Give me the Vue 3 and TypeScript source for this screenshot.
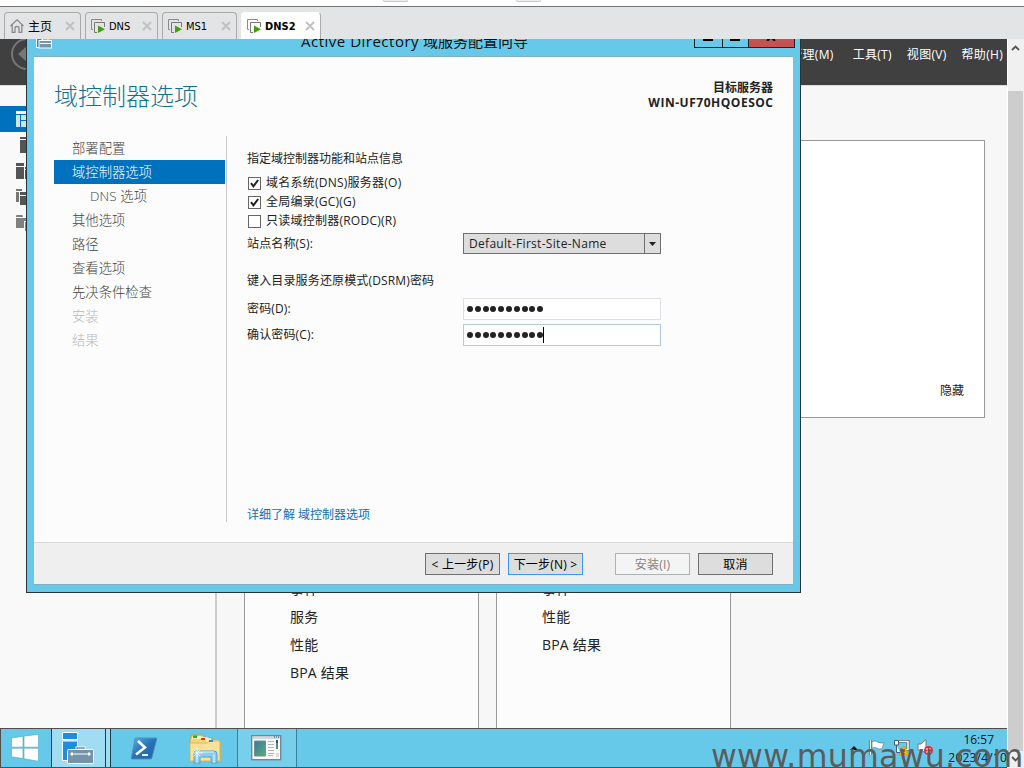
<script setup lang="ts">
interface Tab { label: string; width: number; home?: boolean; active?: boolean }
interface Step { label: string; state?: 'active' | 'off'; sub?: boolean }

const tabs: Tab[] = [
  { label: '主页', width: 77, home: true },
  { label: 'DNS', width: 73 },
  { label: 'MS1', width: 75 },
  { label: 'DNS2', width: 80, active: true },
]
const steps: Step[] = [
  { label: '部署配置' },
  { label: '域控制器选项', state: 'active' },
  { label: 'DNS 选项', sub: true },
  { label: '其他选项' },
  { label: '路径' },
  { label: '查看选项' },
  { label: '先决条件检查' },
  { label: '安装', state: 'off' },
  { label: '结果', state: 'off' },
]
const options = [
  { label: '域名系统(DNS)服务器(O)', checked: true },
  { label: '全局编录(GC)(G)', checked: true },
  { label: '只读域控制器(RODC)(R)', checked: false },
]
const cards = [
  ['事件', '服务', '性能', 'BPA 结果'],
  ['事件', '性能', 'BPA 结果'],
]
const dots = Array.from({ length: 10 }, (_, i) => i)
</script>

<template>
  <div class="screen">
    <div class="toolstrip"><i class="stub first"></i><i class="stub second"></i></div>
    <div class="tabbar">
      <div v-for="t in tabs" :key="t.label" class="tab" :class="{ active: t.active, home: t.home }" :style="{ width: t.width + 'px' }">
        <svg v-if="t.home" class="tab-icon" width="16" height="16" viewBox="0 0 16 16" fill="none" stroke="#8a8a8a" stroke-width="1.3">
          <path d="M1.5 8 8 1.8 14.5 8M3.2 7v7.3H6V9.8Q6 8.5 8 8.5T10 9.8v4.5h2.8V7" />
        </svg>
        <svg v-else class="tab-icon" width="16" height="16" viewBox="0 0 16 16">
          <path d="M3 11.5H1.5v-10h10V3" fill="none" stroke="#8a8a8a" />
          <path d="M7 14.5H4.5v-10h10V9" fill="none" stroke="#777" />
          <path d="M8 7.5 15 11.2 8 15z" fill="#43a00d" />
        </svg>
        <span class="tab-label">{{ t.label }}</span>
        <svg class="tab-close" width="10" height="10" viewBox="0 0 10 10"><path d="M1 1l8 8M9 1l-8 8" stroke="#c2c2c2" stroke-width="2" /></svg>
      </div>
    </div>

    <div class="stage">
      <div class="desktop">
        <header class="manager-head">
          <svg class="back" width="32" height="34" viewBox="0 0 32 34">
            <circle cx="27" cy="15" r="15" fill="none" stroke="#777" stroke-width="2" />
            <path d="M18 15 28 6v18z" fill="#777" />
          </svg>
          <nav class="menu"><span>管理(M)</span><span>工具(T)</span><span>视图(V)</span><span>帮助(H)</span></nav>
        </header>
        <div class="manager-body">
          <aside class="sidebar">
            <div class="side-item selected">
              <svg width="16" height="16" viewBox="0 0 16 16"><path d="M0 0h16v3H0z" fill="#fff" /><path d="M0 4h4v12H0zM5 4h11v5H5zM5 10h11v6H5z" fill="#cce3f3" /></svg>
            </div>
            <div class="side-item"><svg width="16" height="16" viewBox="0 0 16 16"><path d="M4 0h12v2H4zM4 3h12v13H4z" fill="#555" /></svg></div>
            <div class="side-item"><svg width="16" height="16" viewBox="0 0 16 16"><path d="M0 0h8v3H0zM0 4h8v12H0zM9 7h7v9H9zM9 4h7v2H9z" fill="#555" /></svg></div>
            <div class="side-item"><svg width="16" height="16" viewBox="0 0 16 16"><path d="M0 0h6v2H0zM0 3h3v10H0z" fill="#777" /><path d="M4 3h12v3H4zM4 7h12v9H4z" fill="#555" /></svg></div>
            <div class="side-item"><svg width="16" height="16" viewBox="0 0 16 16"><path d="M0 1Q0 0 1 0h5q1 0 1 2H0zM0 3h10v3H8v7H0zM9 7h7v9H9z" fill="#808080" /></svg></div>
          </aside>
          <main class="dashboard">
            <section class="welcome"><span>隐藏</span></section>
            <div class="cards">
              <section v-for="(c, i) in cards" :key="i" class="card"><p v-for="line in c" :key="line">{{ line }}</p></section>
            </div>
          </main>
        </div>

        <footer class="taskbar">
          <div class="start">
            <svg width="28" height="28" viewBox="0 0 28 28" stroke="#4ba6c8" stroke-width=".6" fill="#fff"><path d="M.5 4 12 2.3v10.9H.5zM13 2.1 27.5.4v12.8H13zM.5 14.2H12v10.3L.5 22.8zM13 14.2h14.5v13L13 24.8z" /></svg>
          </div>
          <div class="task manager-task">
            <svg width="33" height="33" viewBox="0 0 33 33">
              <path d="M.5.5h15v7H.5zM.5 9h15v19.5H.5z" fill="#1f8dde" stroke="#fff" />
              <path d="M15 18v-2h7v2" fill="none" stroke="#fff" stroke-width="3" /><path d="M15 18v-2h7v2" fill="none" stroke="#6f8fa8" stroke-width="1.4" />
              <rect x="5.5" y="17.5" width="26" height="14" rx="1" fill="#7593a9" stroke="#fff" />
              <path d="M8 22h21" stroke="#fff" /><path d="M10 20.5v3M27 20.5v3" stroke="#fff" stroke-width="2" />
            </svg>
          </div>
          <div class="stack-edge"></div>
          <div class="pinned shell">
            <svg width="28" height="24" viewBox="0 0 28 24">
              <defs><linearGradient id="ps" x1="0" x2="1" y1="0" y2="1"><stop stop-color="#64b0dc" /><stop offset=".5" stop-color="#2473b5" /><stop offset="1" stop-color="#2460b4" /></linearGradient></defs>
              <path d="M6 1h20q1 0 .8 1l-5 19q-.3 1-1.5 1H2q-1 0-.7-1L5 2q.2-1 1-1z" fill="url(#ps)" stroke="#4c91bd" />
              <path d="M8 4l7 6.5-9 7" fill="none" stroke="#fff" stroke-width="2.5" /><path d="M12 18h6" stroke="#dff2ff" stroke-width="2" />
            </svg>
          </div>
          <div class="pinned folder">
            <svg width="32" height="32" viewBox="0 0 32 32">
              <path d="M1 27V5q0-1 1-1V2q0-1 1-1h12v3h8v3h8v20z" fill="#f3d57b" stroke="#c69d39" />
              <path d="M3 4h15v3h11M5 3h7M14 5h8M22 8h8" fill="none" stroke="#fff2ba" stroke-width="1.6" />
              <path d="M1 9h17l3-2h10v20H1z" fill="#f9e198" stroke="#dab958" />
              <path d="M4 1.5h4V4H4z" fill="#12bd2c" /><path d="M12 4h4v2h-4z" fill="#d93b24" /><path d="M20 6h4v2h-4z" fill="#278bd6" />
              <path d="M5 29V19q0-2 2-2h18q3 0 3 3v9h-6v-6H11v6H5z" fill="#8dcced" stroke="#4ca4ce" />
              <path d="M7 18h18M8 20v9M25 20v9" stroke="#d8f3ff" /><path d="M8 13v12M2 19h12M4.500 15.500l7 7M11.500 15.500l-7 7" stroke="#fff" stroke-width=".7" />
            </svg>
          </div>
          <div class="task window-task">
            <svg width="31" height="26" viewBox="0 0 31 26">
              <defs><linearGradient id="pane" x1="0" x2="1" y1="0" y2="1"><stop stop-color="#387aa2" /><stop offset="1" stop-color="#5dac70" /></linearGradient></defs>
              <rect x=".7" y=".7" width="29" height="24" fill="#f9f9f9" stroke="#788692" stroke-width="1.4" />
              <path d="M2 2h27v2H2z" fill="#ccdce4" /><path d="M23 2h1M25 2h1M27 2h1" stroke="#25475b" />
              <path d="M3.500 6h11v15h-11z" fill="url(#pane)" stroke="#7b8f8b" />
              <path d="M17 6.500h6M17 9.500h6M17 12.500h6M17 15.500h6M17 18.500h6M17 20.500h5" stroke="#b5b5b5" />
              <path d="M25 5h2v9h-2z" fill="#4c9a71" /><path d="M25 5h2v3h-2z" fill="#265589" /><path d="M25 18h3v4h-3z" fill="#ddd" />
            </svg>
          </div>
          <div class="tray">
            <svg class="tray-up" width="8" height="4" viewBox="0 0 8 4"><path d="M0 4 4 0l4 4z" fill="#111" /></svg>
            <svg width="17" height="17" viewBox="0 0 17 17"><path d="M1.500 1v15" stroke="#555" stroke-width="3" /><path d="M1.500 1v15" stroke="#fff" stroke-width="1.500" /><path d="M3 2.500q3-1.500 6 .7 3 1.500 6 .5l-2 6q-3 1-5-.5t-5 0z" fill="#fff" stroke="#657b86" stroke-width=".7" /></svg>
            <svg width="17" height="17" viewBox="0 0 17 17"><path d="M5 2.500h10v8H7" fill="none" stroke="#45626e" stroke-width="3" /><path d="M5 2.500h10v8H7" fill="none" stroke="#fff" stroke-width="1.500" /><path d="M1.500 1.500h4V6h-4zM3.500 6v7.500H7" fill="#fff" stroke="#435e6a" /><path d="M11 7 16 16H6z" fill="#f7b519" stroke="#d68c00" stroke-width=".6" /><path d="M11 10v3M11 14v1" stroke="#553400" stroke-width="1.200" /></svg>
            <svg width="17" height="17" viewBox="0 0 17 17"><path d="M1 5h3l5-4.500v14L4 11H1z" fill="#fff" stroke="#6b7d86" /><circle cx="11.500" cy="11.500" r="4.500" fill="#dc2f32" /><path d="m9.500 9.500 4 4m0-4-4 4" stroke="#fff" stroke-width="1.500" /></svg>
          </div>
          <div class="clock"><span>16:57</span><span class="date">2023/4/10</span></div>
        </footer>

        <div class="dialog">
          <div class="dialog-title">
            <svg class="dialog-icon" width="17" height="17" viewBox="0 0 17 17"><path d="M.5 0h6v15.500h-6z" fill="#1f8dde" stroke="#fff" /><rect x="3" y="8.500" width="12.500" height="7.500" fill="#7593a9" stroke="#fff" /><path d="M6 8V6.500h6V8M4 11.500h11" fill="none" stroke="#fff" /></svg>
            <span class="dialog-name"><span class="latin">Active Directory</span> 域服务配置向导</span>
            <div class="controls"><i></i><i></i><i class="close"><svg width="10" height="8" viewBox="0 0 10 8"><path d="M1 0l8 8M9 0 1 8" stroke="#000" stroke-width="2" /></svg></i></div>
          </div>
          <div class="dialog-body">
            <div class="page-head">
              <h1>域控制器选项</h1>
              <div class="target"><span>目标服务器</span><span class="host">WIN-UF70HQOESOC</span></div>
            </div>
            <div class="page">
              <ul class="steps">
                <li v-for="s in steps" :key="s.label" :class="[s.state, { sub: s.sub }]">{{ s.label }}</li>
              </ul>
              <div class="form">
                <div class="caption">指定域控制器功能和站点信息</div>
                <div v-for="o in options" :key="o.label" class="check">
                  <span class="box"><svg v-if="o.checked" width="11" height="11" viewBox="0 0 11 11"><path d="M2 5.200 4.400 8.300 9.200 2" fill="none" stroke="#222" stroke-width="2" /></svg></span>
                  <span class="check-label">{{ o.label }}</span>
                </div>
                <div class="row site"><span>站点名称(S):</span>
                  <div class="combo"><span>Default-First-Site-Name</span><i><svg width="7" height="4" viewBox="0 0 7 4"><path d="M0 0h7L3.500 4z" fill="#222" /></svg></i></div>
                </div>
                <div class="caption dsrm">键入目录服务还原模式(DSRM)密码</div>
                <div class="row"><span>密码(D):</span><div class="password"><b v-for="d in dots" :key="d"></b></div></div>
                <div class="row"><span>确认密码(C):</span><div class="password focus"><b v-for="d in dots" :key="d"></b><i class="caret"></i></div></div>
                <a class="more">详细了解 域控制器选项</a>
              </div>
            </div>
            <div class="actions">
              <button>&lt; 上一步(P)</button><button class="primary">下一步(N) &gt;</button><button class="disabled">安装(I)</button><button>取消</button>
            </div>
          </div>
        </div>
      </div>
      <div class="scrollbar">
        <svg class="arrow up" width="9" height="6" viewBox="0 0 9 6"><path d="M1 5l3.500-3.500L8 5" fill="none" stroke="#555" stroke-width="1.800" /></svg>
        <div class="thumb"></div>
        <svg class="arrow down" width="9" height="6" viewBox="0 0 9 6"><path d="M1 1l3.500 3.500L8 1" fill="none" stroke="#555" stroke-width="1.800" /></svg>
      </div>
    </div>
    <div class="watermark">www.mumawu.com</div>
  </div>
</template>

<style>
body { margin: 0; overflow: hidden; }
</style>

<style scoped>
* { box-sizing: border-box; }
svg { display: block; flex: none; }
.screen { position: relative; width: 1024px; height: 768px; display: flex; flex-direction: column; overflow: hidden; background: #fff; color: #222; font: 12px/16px "Open Sans", "Noto Sans CJK SC", sans-serif; white-space: nowrap; }
.toolstrip { height: 7px; flex: none; border-bottom: 1px solid #707370; display: flex; }
.stub { width: 25px; height: 2px; border: 1px solid #c8c8c8; border-top: 0; border-radius: 0 0 3px 3px; background: #eee; }
.first { margin-left: 383px; }
.second { margin-left: 108px; }
.tabbar { height: 32px; flex: none; display: flex; align-items: flex-end; gap: 4px; padding-left: 4px; background: #e3e4e6; }
.tab { height: 27px; display: flex; align-items: center; border: 1px solid #aaa; border-bottom: 0; border-radius: 4px 4px 0 0; padding: 0 5px 0 4px; color: #000; font-family: "DejaVu Sans Condensed", "DejaVu Sans", "Noto Sans CJK SC", sans-serif; font-size: 11px; font-stretch: condensed; }
.tab.active { background: #fff; font-weight: 700; border-color: #fff #aaa #fff #fff; }
.home .tab-label { font-size: 12px; }
.tab-label { margin-left: 3px; padding-top: 1px; }
.tab-close { margin-left: auto; }
.stage { flex: 1; min-height: 0; display: flex; }
.desktop { position: relative; width: 1007px; height: 729px; overflow: hidden; display: flex; flex-direction: column; background: #f7f7f7; }
.manager-head { height: 46px; flex: none; display: flex; justify-content: space-between; background: #404040; color: #fff; }
.menu { display: flex; gap: 15px; padding: 8px 4px 0 0; letter-spacing: .3px; }
.menu span:first-child { margin-right: 4px; }
.manager-body { flex: 1; min-height: 0; display: flex; overflow: hidden; border-top: 1px solid #ddd; }
.sidebar { width: 217px; flex: none; padding-top: 20px; border-right: 2px solid #ccc; background: #f9f9f9; }
.side-item { height: 26px; padding: 5px 0 0 16px; }
.selected { background: #0072bd; }
.dashboard { flex: 1; display: flex; flex-direction: column; padding: 54px 22px 0 27px; }
.welcome { height: 278px; flex: none; border: 1px solid #999; background: #fff; display: flex; align-items: flex-end; justify-content: flex-end; padding: 0 20px 18px 0; }
.cards { flex: none; height: 400px; margin-top: 22px; display: flex; gap: 17px; }
.card { width: 235px; border: 1px solid #999; background: #fcfcfc; padding: 134px 0 0 45px; font-size: 14px; letter-spacing: .2px; }
.card p { margin: 0; height: 28px; line-height: 28px; }
.taskbar { height: 40px; flex: none; display: flex; background: #66c9ea; border: solid #4e4e4e; border-width: 1px 0 1px 1px; color: #111; }
.start { width: 50px; padding: 5px 0 0 10px; }
.task { border: solid #397f99; border-width: 0 1px; }
.manager-task { width: 55px; padding: 3px 0 0 10px; background: #a0dcf2; border-color: #223c47; }
.stack-edge { width: 5px; border-right: 1px solid #223c47; background: #a0dcf2; }
.pinned.shell { margin-left: 19px; padding-top: 8px; }
.pinned.folder { margin-left: 31px; padding-top: 5px; }
.window-task { width: 60px; margin-left: 16px; padding: 6px 0 0 13px; background: #78cfeb; }
.tray { margin-left: auto; display: flex; gap: 7px; padding-top: 10px; }
.tray-up { margin: 7px 4px 0 0; }
.clock { width: 73px; flex: none; display: flex; flex-direction: column; align-items: flex-end; padding: 2px 0 0; line-height: 18px; }
.clock span:first-child { margin-right: 13px; }
.date { letter-spacing: .2px; }
.dialog { position: absolute; left: 26px; top: -14px; width: 775px; height: 568px; border: 1px solid #28343a; background: #66c9ea; padding: 0 7px 7px; display: flex; flex-direction: column; }
.dialog-title { height: 30px; flex: none; display: flex; justify-content: space-between; }
.dialog-icon { margin: 6px 0 0 2px; }
.dialog-name { color: #111; font-size: 15px; line-height: 22px; margin: 4px 0 0 82px; }
.latin { letter-spacing: .5px; }
.controls { display: flex; height: 22px; margin-right: -2px; border: 1px solid #222; border-top: 0; }
.controls i { width: 28px; border-right: 1px solid #222; display: flex; justify-content: center; align-items: flex-end; }
.controls i:nth-child(2) { width: 26px; }
.controls i:not(.close)::after { content: ""; width: 10px; height: 3px; margin-bottom: 6px; background: #000; }
.controls i.close { width: 45px; border: 0; background: #c75050; padding-bottom: 6px; }
.dialog-body { flex: 1; display: flex; flex-direction: column; border-top: 1px solid #83adc0; border-bottom: 1px solid #7fb0c4; background: #fcfcfc; }
.page-head { height: 79px; flex: none; display: flex; justify-content: space-between; padding: 23px 20px 0; }
h1 { margin: 0; font-size: 24px; line-height: 32px; font-weight: 300; color: #0e7391; }
.target { display: flex; flex-direction: column; align-items: flex-end; font-weight: 600; line-height: 15px; }
.host { font-weight: 700; letter-spacing: .52px; margin-right: -.5px; }
.page { height: 386px; flex: none; display: flex; padding-left: 20px; }
.steps { list-style: none; width: 173px; margin: 0; padding: 0 1px 0 0; border-right: 1px solid #c8c8c8; font-size: 13.33px; line-height: 25px; font-weight: 300; color: #444; }
.steps li { height: 24px; padding-left: 18px; }
.steps .sub { padding-left: 36px; letter-spacing: .15px; }
.steps .active { background: #0072bd; color: #fff; }
.steps .off { color: #b8b8b8; }
.form { flex: 1; display: flex; flex-direction: column; padding: 15px 0 0 20px; }
.caption { height: 16px; margin-bottom: 7px; }
.check { height: 19px; display: flex; gap: 5px; }
.check-label { padding-top: 1px; letter-spacing: .24px; }
.box { width: 13px; height: 13px; margin: 3px 0 0 1px; border: 1px solid #666; background: #fff; }
.row { height: 26px; display: flex; line-height: 22px; }
.row > span { width: 216px; letter-spacing: .15px; }
.row.site { height: 21px; margin-top: 2px; }
.combo { width: 198px; height: 21px; border: 1px solid #707070; background: #ddd; display: flex; justify-content: space-between; line-height: 19px; padding-left: 5px; letter-spacing: .3px; }
.combo i { width: 16px; border-left: 1px solid #707070; display: flex; align-items: center; justify-content: center; }
.caption.dsrm { margin: 19px 0 9px; letter-spacing: .15px; }
.password { width: 198px; height: 22px; border: 1px solid #dfdfe6; background: #fff; display: flex; align-items: center; gap: 1.8px; padding-left: 3px; }
.password b { width: 6px; height: 6px; border-radius: 50%; background: #222; }
.focus { border-color: #b1cbe3; }
.caret { width: 1px; height: 16px; margin-left: -1.8px; background: #000; }
.more { margin: auto 0 -1px; color: #0d6fb8; }
.actions { margin-top: 20px; flex: 1; display: flex; align-items: flex-start; justify-content: flex-end; padding: 10px 20px 0; gap: 8px; border-top: 1px solid #dadada; background: #efefef; }
button { width: 75px; height: 22px; padding: 1px 0 0; border: 1px solid #707070; background: #ddd; color: #000; font: inherit; line-height: 19px; letter-spacing: .2px; white-space: nowrap; }
.primary { border-color: #3399ff; }
.disabled { margin-left: 24px; border-color: #adb2b5; background: #f4f4f4; color: #838383; }
.scrollbar { width: 17px; height: 729px; background: #f0f0f0; border-left: 1px solid #fff; padding-right: 1px; display: flex; flex-direction: column; align-items: center; }
.up { margin-top: 6px; }
.thumb { flex: 1; width: 15px; margin-top: 40px; background: #cdcdcd; }
.down { margin: 5px 0 6px; }
.watermark { position: absolute; left: 711px; top: 737px; color: #5c5c5c; font: 31.6px/38px "DejaVu Sans", sans-serif; letter-spacing: .25px; }
</style>
